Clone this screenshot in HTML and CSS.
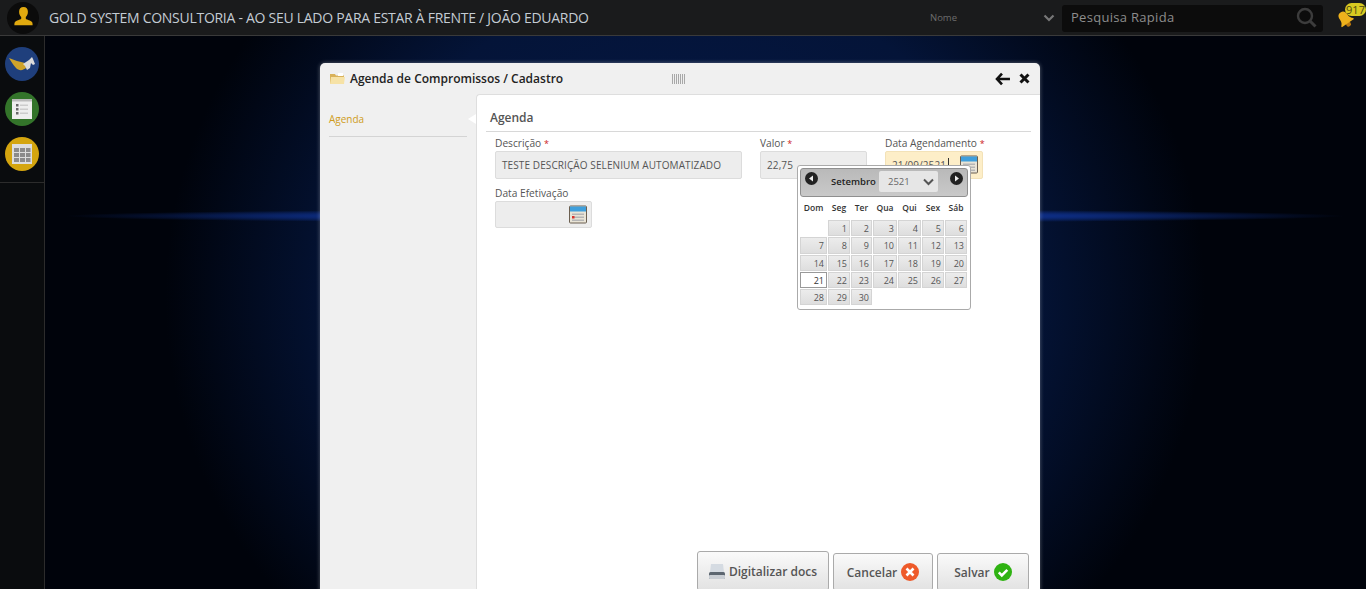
FILE: index.html
```html
<!DOCTYPE html>
<html lang="pt-BR">
<head>
    <meta charset="UTF-8">
    <title>Agenda de Compromissos</title>
    <link rel="stylesheet" href="styles.css">
</head>
<body>
    <header class="topbar">
        <div class="avatar">
            <svg width="23" height="23" viewBox="0 0 24 24"><path fill="#e0a90f" d="M12 1c-3 0-4.600 2-4.600 5 0 2.400.9 4.300 2.200 5.500v1.800c-1 1.200-5.300 1.700-6.500 3.500-.6 1-.6 2.200-.6 3.200h19c0-1 0-2.200-.6-3.200-1.200-1.800-5.500-2.300-6.500-3.500v-1.800c1.300-1.200 2.200-3.100 2.200-5.500 0-3-1.600-5-4.600-5z"/></svg>
        </div>
        <div class="brand">GOLD SYSTEM CONSULTORIA - AO SEU LADO PARA ESTAR À FRENTE / JOÃO EDUARDO</div>
        <div class="search-type">
            <span>Nome</span>
            <svg width="12" height="8" viewBox="0 0 12 8"><path d="M1.500 1.500l4.500 4.500 4.500-4.500" fill="none" stroke="#777" stroke-width="2.200"/></svg>
        </div>
        <div class="search">
            <span>Pesquisa Rapida</span>
            <svg width="21" height="21" viewBox="0 0 21 21"><circle cx="9" cy="9" r="7" fill="none" stroke="#3c3c3c" stroke-width="2.400"/><path d="M14 14l5.500 5.500" stroke="#3c3c3c" stroke-width="3"/></svg>
        </div>
        <div class="bell">
            <svg width="18" height="18" viewBox="0 0 16 16"><g transform="rotate(-35 8 8)"><circle cx="8" cy="13.500" r="2.200" fill="#b9770f"/><path fill="#eeb11c" d="M8 1c3 0 4 2 4 5 0 3 1 4 2.500 5.500v1h-13v-1C3 10 4 9 4 6c0-3 1-5 4-5z"/></g></svg>
            <span class="bell-count">917</span>
        </div>
    </header>

    <div class="workspace">
        <nav class="sidebar">
            <div class="side-icons">
                <a class="side-btn blue">
                    <svg width="26" height="15" viewBox="0 0 26 15"><path fill="#cfa32a" d="M0 1c5 2 11 4 16 5l2 4c-4 4-8 4-11 1C4 8 2 4 0 1z"/><path fill="#dcdcdc" d="M14 7l6-4 3-3 1 2 2 5-2 1-2-2-1 5-3 2-2-4z"/></svg>
                </a>
                <a class="side-btn green">
                    <svg width="20" height="20" viewBox="0 0 20 20"><rect width="20" height="20" fill="#eee"/><rect width="20" height="2.500" fill="#bbb"/><g fill="#666"><rect x="4" y="5" width="2.500" height="2.500"/><rect x="4" y="9" width="2.500" height="2.500"/><rect x="4" y="13" width="2.500" height="2.500"/></g><g fill="#ccc"><rect x="8" y="5.500" width="8" height="1.500"/><rect x="8" y="9.500" width="8" height="1.500"/><rect x="8" y="13.500" width="8" height="1.500"/></g></svg>
                </a>
                <a class="side-btn gold">
                    <svg width="20" height="20" viewBox="0 0 20 20"><rect width="20" height="20" fill="#ddd"/><g fill="#8b8b8b"><rect x="2" y="4" width="5" height="4"/><rect x="8" y="4" width="5" height="4"/><rect x="14" y="4" width="4.500" height="4"/><rect x="2" y="9" width="5" height="4"/><rect x="8" y="9" width="5" height="4"/><rect x="14" y="9" width="4.500" height="4"/><rect x="2" y="14" width="5" height="4"/><rect x="8" y="14" width="5" height="4"/><rect x="14" y="14" width="4.500" height="4"/></g></svg>
                </a>
            </div>
        </nav>

        <main class="desktop">
            <section class="modal">
                <div class="modal-head">
                    <svg class="folder" width="15" height="13" viewBox="0 0 15 13"><path fill="#d9b25a" d="M0 2h5l1 1.500h8V12H0z"/><path fill="#f6e2a6" d="M1 5h14l-1 7H0z"/><rect x="8" y="1" width="5" height="3" fill="#fff"/></svg>
                    <span class="modal-title">Agenda de Compromissos / Cadastro</span>
                    <span class="barcode"></span>
                    <svg class="head-icon" width="16" height="14" viewBox="0 0 16 14"><path d="M7 1.500L2 7l5 5.500M2.500 7H15" fill="none" stroke="#111" stroke-width="2.600"/></svg>
                    <svg class="head-icon" width="11" height="11" viewBox="0 0 11 11"><path d="M1.500 1.500l8 8M9.500 1.500l-8 8" fill="none" stroke="#111" stroke-width="3"/></svg>
                </div>
                <div class="modal-body">
                    <aside class="tabs">
                        <div class="tab">Agenda</div>
                    </aside>
                    <div class="panel">
                        <h2 class="panel-title">Agenda</h2>
                        <div class="form-row">
                            <div class="field w-desc">
                                <label>Descrição <i>*</i></label>
                                <div class="input">TESTE DESCRIÇÃO SELENIUM AUTOMATIZADO</div>
                            </div>
                            <div class="field w-valor">
                                <label>Valor <i>*</i></label>
                                <div class="input">22,75</div>
                            </div>
                            <div class="field w-data">
                                <label>Data Agendamento <i>*</i></label>
                                <div class="input focused">
                                    <span class="typed">21/09/2521</span>
                                    <svg class="cal" width="18" height="19" viewBox="0 0 18 19"><use href="#cal-icon"/></svg>
                                </div>
                            </div>
                        </div>
                        <div class="form-row second">
                            <div class="field w-data">
                                <label>Data Efetivação</label>
                                <div class="input">
                                    <svg class="cal" width="18" height="19" viewBox="0 0 18 19"><use href="#cal-icon"/></svg>
                                </div>
                            </div>
                        </div>
                        <div class="actions">
                            <button class="btn btn-tall">
                                <svg width="16" height="15" viewBox="0 0 16 15"><path fill="#d5dbe2" d="M2 0h12l1 8H1z"/><rect y="8" width="16" height="7" rx="1.500" fill="#5c6670"/><rect y="11" width="16" height="4" rx="1" fill="#c9ced4"/></svg>
                                Digitalizar docs
                            </button>
                            <button class="btn btn-cancel">
                                Cancelar
                                <svg width="18" height="18" viewBox="0 0 18 18"><circle cx="9" cy="9" r="9" fill="#ee5a2a"/><path d="M5.500 5.500l7 7M12.500 5.500l-7 7" stroke="#fff" stroke-width="2.600"/></svg>
                            </button>
                            <button class="btn btn-save">
                                Salvar
                                <svg width="18" height="18" viewBox="0 0 18 18"><circle cx="9" cy="9" r="9" fill="#2fb312"/><path d="M4.800 9.300l3 3 5.500-5.500" fill="none" stroke="#fff" stroke-width="2.600"/></svg>
                            </button>
                        </div>

                        <div class="datepicker">
                            <div class="dp-head">
                                <svg width="13" height="13" viewBox="0 0 13 13"><circle cx="6.500" cy="6.500" r="6.500" fill="#222"/><path d="M8 3.500v6L4 6.500z" fill="#eee"/></svg>
                                <span class="dp-month">Setembro</span>
                                <span class="dp-year">2521
                                    <svg width="11" height="8" viewBox="0 0 11 8"><path d="M1 1.500l4.500 4.500L10 1.500" fill="none" stroke="#555" stroke-width="2"/></svg>
                                </span>
                                <svg width="13" height="13" viewBox="0 0 13 13"><circle cx="6.500" cy="6.500" r="6.500" fill="#222"/><path d="M5 3.500v6l4-3z" fill="#eee"/></svg>
                            </div>
                            <table class="dp-table">
                                <thead>
                                    <tr><th>Dom</th><th>Seg</th><th>Ter</th><th>Qua</th><th>Qui</th><th>Sex</th><th>Sáb</th></tr>
                                </thead>
                                <tbody>
                                    <tr><td class="empty"></td><td>1</td><td>2</td><td>3</td><td>4</td><td>5</td><td>6</td></tr>
                                    <tr class="row-tall"><td>7</td><td>8</td><td>9</td><td>10</td><td>11</td><td>12</td><td>13</td></tr>
                                    <tr><td>14</td><td>15</td><td>16</td><td>17</td><td>18</td><td>19</td><td>20</td></tr>
                                    <tr><td class="today">21</td><td>22</td><td>23</td><td>24</td><td>25</td><td>26</td><td>27</td></tr>
                                    <tr><td>28</td><td>29</td><td>30</td><td class="empty"></td><td class="empty"></td><td class="empty"></td><td class="empty"></td></tr>
                                </tbody>
                            </table>
                        </div>
                    </div>
                </div>
            </section>
        </main>
    </div>

    <svg class="defs" width="0" height="0">
        <symbol id="cal-icon" viewBox="0 0 18 19">
            <rect x="0.500" y="1" width="17" height="17" rx="1" fill="#e9e4d6" stroke="#6b5f50"/>
            <rect x="1" y="1.500" width="16" height="5" fill="#3f9fdc"/>
            <g fill="#b5b5b5"><rect x="3" y="8.500" width="12" height="1.500"/><rect x="3" y="11.500" width="12" height="1.500"/><rect x="3" y="14.500" width="12" height="1.500"/></g>
            <rect x="3" y="11" width="2.500" height="2.500" fill="#d8332c"/>
        </symbol>
    </svg>
</body>
</html>
```

FILE: styles.css
```css
* {
    box-sizing: border-box;
}
html, body {
    height: 100%;
}
body {
    margin: 0;
    overflow: hidden;
    display: flex;
    flex-direction: column;
    background-color: #000;
    font-family: "Open Sans", sans-serif;
}
.defs {
    position: absolute;
}

/* top bar */
.topbar {
    height: 36px;
    flex: none;
    display: flex;
    align-items: center;
    padding-left: 7px;
    background-color: #1a1b1c;
    border-bottom: 1px solid #3a3a3a;
}
.avatar {
    width: 32px;
    height: 32px;
    border-radius: 50%;
    background-color: #0b0b0b;
    display: flex;
    align-items: center;
    justify-content: center;
}
.brand {
    margin-left: 10px;
    width: 881px;
    font-size: 14px;
    letter-spacing: -0.280px;
    color: #c4ccd4;
    white-space: nowrap;
}
.search-type {
    width: 132px;
    height: 36px;
    padding-right: 7px;
    display: flex;
    align-items: center;
    justify-content: space-between;
    font-size: 9.500px;
    color: #6d6d6d;
}
.search {
    width: 261px;
    height: 27px;
    margin-top: 2px;
    padding: 0 6px 3px 9px;
    border-radius: 3px;
    background-color: #0c0c0c;
    display: flex;
    align-items: center;
    justify-content: space-between;
    font-size: 13px;
    letter-spacing: 0.300px;
    color: #8d8d8d;
}
.bell {
    position: relative;
    width: 30px;
    height: 35px;
    margin-left: 13px;
    padding-top: 10px;
}
.bell-count {
    position: absolute;
    top: 3px;
    left: 9px;
    width: 21px;
    height: 13px;
    border-radius: 7px;
    background-color: #d8c921;
    color: #4f4a10;
    font-size: 11px;
    line-height: 13px;
    text-align: center;
}

/* side bar */
.workspace {
    flex: 1;
    display: flex;
    min-height: 0;
}
.sidebar {
    width: 45px;
    flex: none;
    background-color: #0a0c0e;
    border-right: 1px solid #2c2c2c;
}
.side-icons {
    height: 147px;
    padding: 11px 0 0 5px;
    display: flex;
    flex-direction: column;
    gap: 11px;
    border-bottom: 1px solid #2c2c2c;
}
.side-btn {
    width: 34px;
    height: 34px;
    border-radius: 50%;
    display: flex;
    align-items: center;
    justify-content: center;
}
.blue { background-color: #1f3f7c; }
.green { background-color: #33742a; }
.gold { background-color: #d4a50f; }

/* desktop */
.desktop {
    flex: 1;
    padding: 27px 0 0 275px;
    overflow: hidden;
    background:
        radial-gradient(ellipse 640px 7px at 660px 180px, #1238a0 0%, #0d2c80 55%, rgba(13, 44, 128, 0) 100%),
        radial-gradient(ellipse 520px 480px at 640px 260px, #05194a 0%, #041438 65%, rgba(2, 8, 22, 0) 100%),
        #00030b;
}

/* window */
.modal {
    width: 720px;
    height: 560px;
    display: flex;
    flex-direction: column;
    border-radius: 5px 5px 0 0;
    background-color: #f0f0f0;
    box-shadow: 0 0 4px rgba(255, 255, 255, 0.35);
}
.modal-head {
    height: 31px;
    flex: none;
    display: flex;
    align-items: center;
    padding: 0 10px;
}
.modal-title {
    margin-left: 5px;
    width: 323px;
    font-size: 12px;
    font-weight: 600;
    color: #222;
    white-space: nowrap;
}
.barcode {
    width: 14px;
    height: 10px;
    background: repeating-linear-gradient(90deg, #a8a8a8 0, #a8a8a8 1px, transparent 1px, transparent 2px);
}
.head-icon {
    margin-left: 8px;
}
.head-icon:nth-of-type(2) {
    margin-left: 309px;
}
.modal-body {
    flex: 1;
    display: flex;
    min-height: 0;
}
.tabs {
    width: 156px;
    flex: none;
    padding: 18px 9px 0 9px;
}
.tab {
    position: relative;
    height: 25px;
    font-size: 10px;
    color: #cf9c20;
    border-bottom: 1px solid #d4d4d4;
}
.tab::after {
    content: "";
    position: absolute;
    right: -9px;
    top: 2px;
    border: 5px solid transparent;
    border-right: 8px solid #fff;
    border-left: 0;
}
.panel {
    position: relative;
    flex: 1;
    display: flex;
    flex-direction: column;
    padding: 0 9px 32px 9px;
    border-top: 1px solid #dedede;
    border-left: 1px solid #dedede;
    border-radius: 4px 0 0 0;
    background-color: #fff;
}
.panel-title {
    margin: 0;
    height: 37px;
    padding: 14px 0 0 4px;
    font-size: 12px;
    font-weight: 600;
    color: #555;
    border-bottom: 1px solid #d8d8d8;
}

/* form */
.form-row {
    display: flex;
    padding: 5px 0 0 9px;
    gap: 18px;
}
.form-row.second {
    padding-top: 8px;
}
.field label {
    display: block;
    height: 14px;
    font-size: 10.200px;
    line-height: 13px;
    color: #555;
    white-space: nowrap;
}
.field label i {
    color: #c22;
    font-size: 9px;
    font-style: normal;
}
.w-desc { width: 247px; }
.w-valor { width: 107px; }
.w-data { width: 98px; }
.second .w-data { width: 97px; }
.input {
    position: relative;
    height: 28px;
    padding-left: 6px;
    display: flex;
    align-items: center;
    font-size: 10px;
    letter-spacing: 0.100px;
    color: #555;
    background-color: #ededed;
    border: 1px solid #dcdcdc;
    border-radius: 2px;
    white-space: nowrap;
}
.second .input {
    height: 27px;
}
.input.focused {
    background-color: #fdeec8;
    border-color: #f3e2b8;
}
.typed {
    padding-right: 2px;
    border-right: 1px solid #333;
}
.cal {
    position: absolute;
    right: 4px;
    top: 3px;
}
.actions {
    margin-top: auto;
    display: flex;
    align-items: flex-end;
    justify-content: flex-end;
    gap: 4px;
    padding-right: 2px;
}
.btn {
    height: 38px;
    display: flex;
    align-items: center;
    justify-content: center;
    gap: 4px;
    padding: 0;
    font-family: "Open Sans", sans-serif;
    font-size: 12px;
    font-weight: 600;
    color: #555;
    background: linear-gradient(#fafafa, #e2e2e2);
    border: 1px solid #aaa;
    border-radius: 3px;
}
.btn-tall {
    width: 132px;
    height: 40px;
}
.btn-cancel { width: 100px; }
.btn-save { width: 92px; }

/* calendar popup */
.datepicker {
    position: absolute;
    left: 320px;
    top: 70px;
    width: 174px;
    height: 145px;
    padding: 2px;
    background-color: #fff;
    border: 1px solid #aaa;
    border-radius: 3px;
}
.dp-head {
    height: 29px;
    padding: 0 0 2px 4px;
    display: flex;
    align-items: center;
    border: 1px solid #8f8f8f;
    border-radius: 3px;
    background: linear-gradient(#b9b9b9, #c9c9c9);
}
.dp-head > svg {
    margin-bottom: 6px;
}
.dp-month {
    margin-left: 13px;
    width: 45px;
    font-size: 9.500px;
    font-weight: 600;
    color: #222;
    white-space: nowrap;
}
.dp-year {
    width: 59px;
    height: 21px;
    margin: 0 12px 0 3px;
    padding: 0 4px 0 9px;
    display: flex;
    align-items: center;
    justify-content: space-between;
    font-size: 9.500px;
    color: #666;
    background-color: #e6e6e6;
    border-radius: 2px;
}
.dp-table {
    margin: 2px 0 0 -1px;
    table-layout: fixed;
    width: 169px;
    border-collapse: separate;
    border-spacing: 1px;
    font-size: 9px;
    color: #555;
}
.dp-table th {
    height: 19px;
    padding: 0 0 4px;
    font-size: 8.500px;
    font-weight: 600;
    color: #333;
    text-align: center;
}
.dp-table th:nth-child(1) { width: 27px; }
.dp-table th:nth-child(2) { width: 22px; }
.dp-table th:nth-child(3) { width: 21px; }
.dp-table th:nth-child(4) { width: 24px; }
.dp-table th:nth-child(5) { width: 23px; }
.dp-table th:nth-child(6), .dp-table th:nth-child(7) { width: 22px; }
.dp-table td {
    height: 16px;
    padding: 0 2px 0 0;
    text-align: right;
    background: linear-gradient(#ececec, #dedede);
    border: 1px solid #d4d4d4;
}
.dp-table .row-tall td {
    height: 17px;
}
.dp-table td.empty {
    background: none;
    border: 0;
}
.dp-table td.today {
    background: #fff;
    border-color: #999;
    color: #333;
}
```
